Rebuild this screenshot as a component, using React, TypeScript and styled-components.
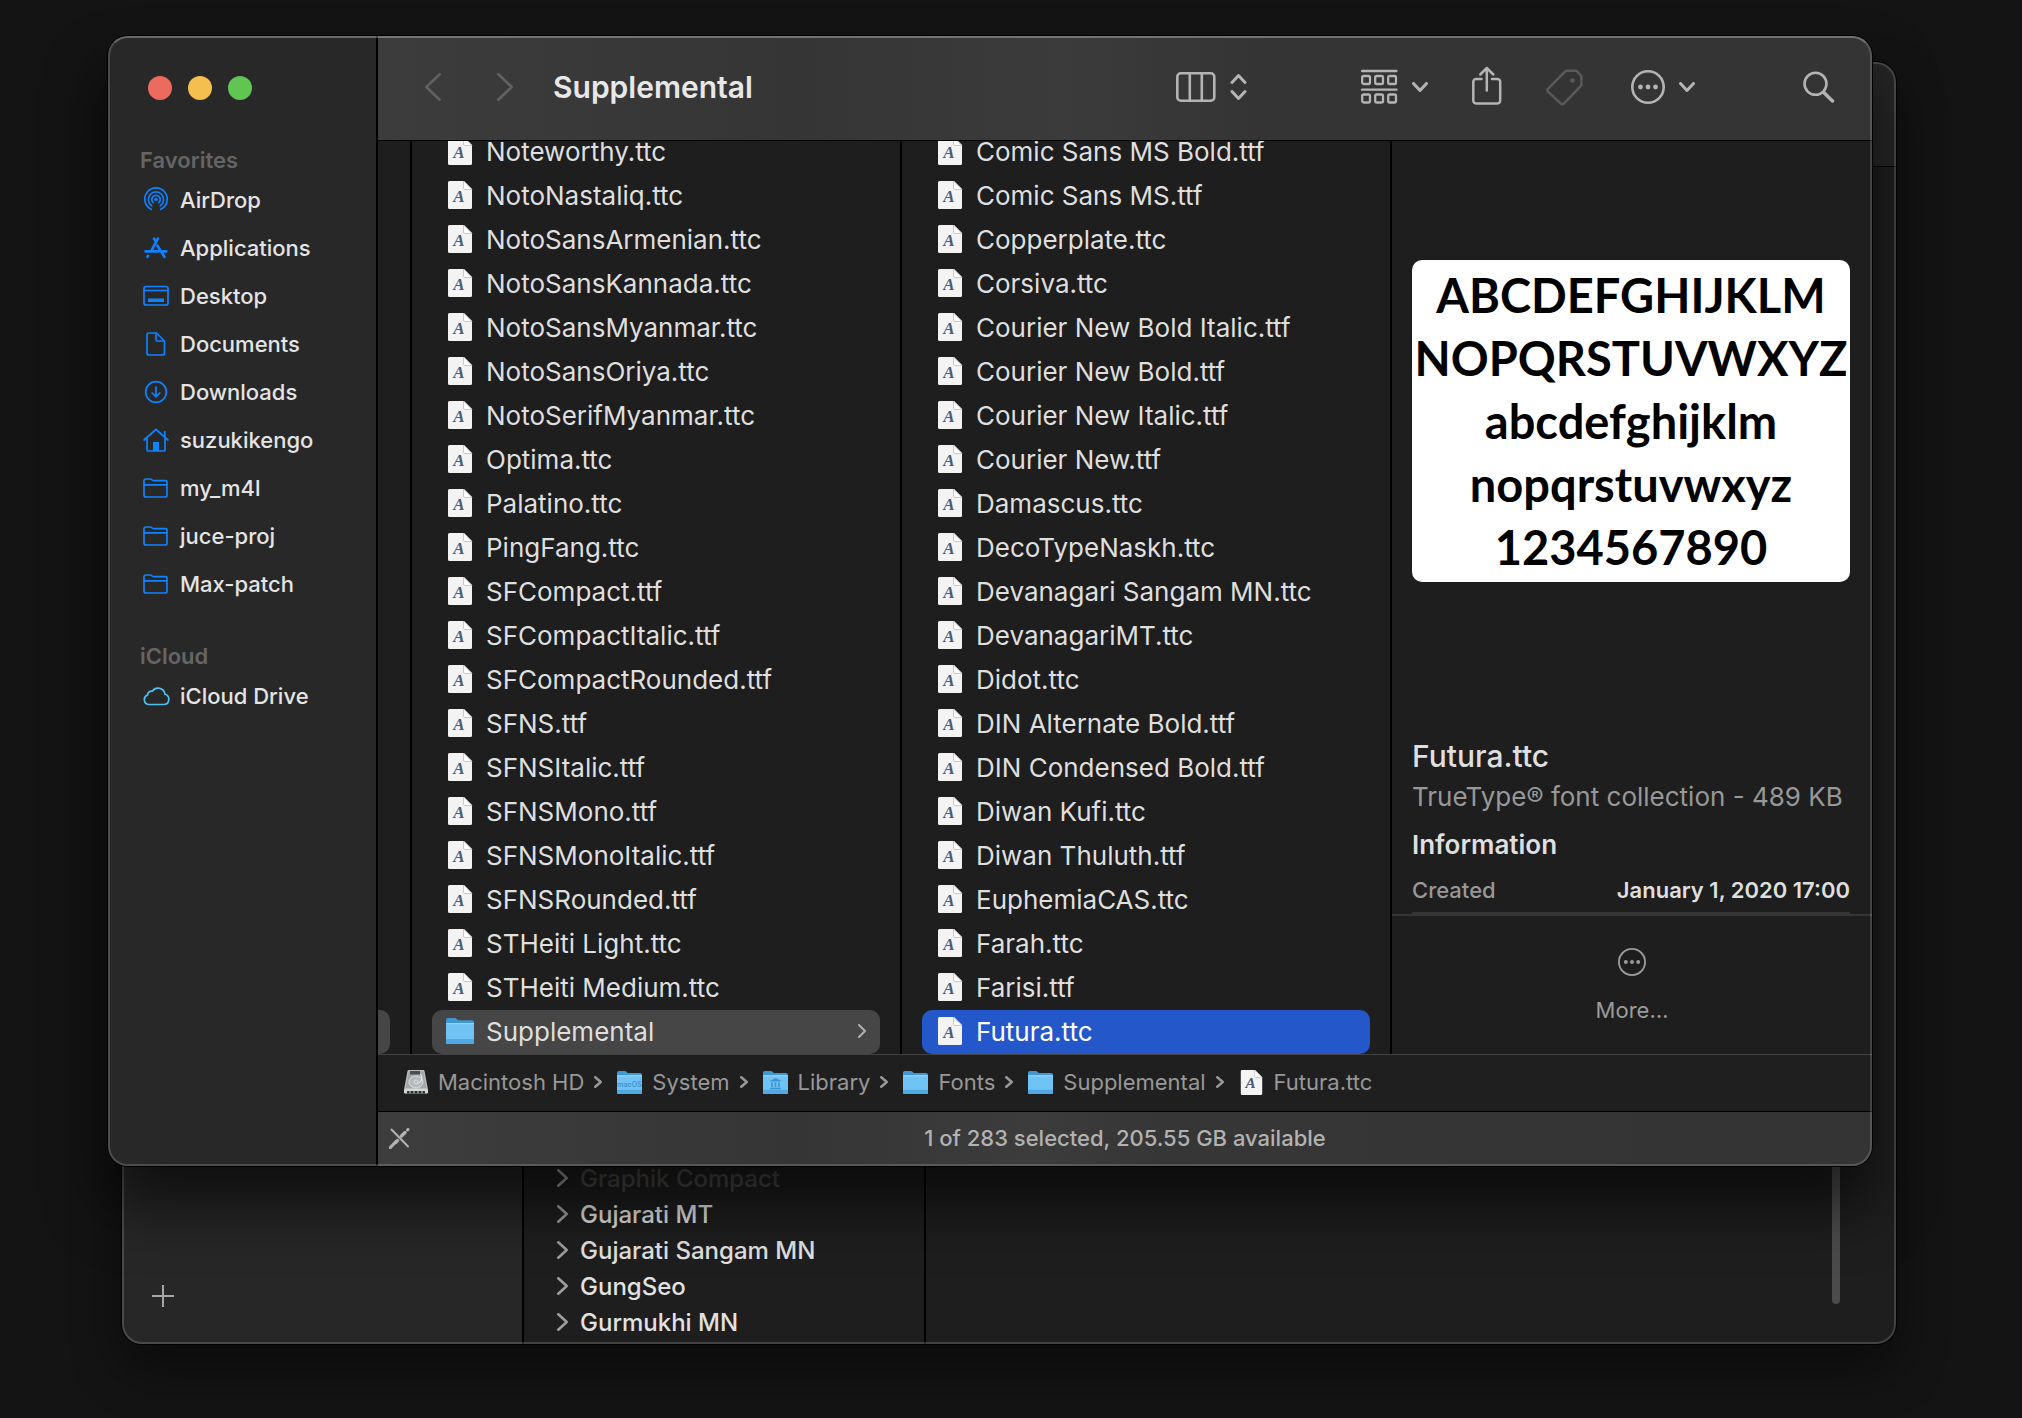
import React from 'react';
import styled, { createGlobalStyle, css } from 'styled-components';

const GlobalStyle = createGlobalStyle`
  *, *::before, *::after { box-sizing: border-box; }
  body { margin: 0; background: #141414; }
  ul { list-style: none; margin: 0; padding: 0; }
  h1, h2, h3, p, dl, dd { margin: 0; }
  button { appearance: none; border: 0; background: none; color: inherit; font: inherit; padding: 0; text-align: left; }
  svg { display: block; flex: none; }
`;

/* ---------- desktop and window frames ---------- */

const Desktop = styled.main`
  position: relative;
  min-height: 100vh;
  overflow: hidden;
  background: #141414;
  color: #dfdfdf;
  font-family: Inter, "Liberation Sans", sans-serif;
  font-size: 22px;
`;

const frame = css`
  position: absolute;
  display: flex;
  border-radius: 20px;
  &::after {
    content: '';
    position: absolute;
    inset: 0;
    border: 2px solid rgba(255, 255, 255, 0.17);
    border-radius: 20px;
    pointer-events: none;
  }
`;

const FinderWindow = styled.section`
  ${frame}
  top: 36px;
  right: 150px;
  bottom: 252px;
  left: 108px;
  background: #1e1e1e;
  box-shadow: 0 0 0 1px #000, 0 40px 60px rgba(0, 0, 0, 0.6);
  &::after { border-top-color: rgba(255, 255, 255, 0.3); }
`;

const FontBookWindow = styled.section`
  ${frame}
  top: 62px;
  right: 126px;
  bottom: 74px;
  left: 122px;
  background: #1e1e1e;
  overflow: hidden;
`;

const FontBookShadow = styled.div`
  position: absolute;
  top: 62px;
  right: 126px;
  bottom: 74px;
  left: 122px;
  border-radius: 20px;
  box-shadow: 0 0 0 1px #000, 0 24px 50px rgba(0, 0, 0, 0.45);
`;

/* ---------- font book window ---------- */

const FontBookSidebar = styled.aside`
  display: flex;
  align-items: flex-end;
  width: 402px;
  padding: 37px 30px;
  background: #272727;
  border-right: 2px solid #000;
`;

const FontBookMain = styled.div`
  flex: 1;
  display: flex;
  flex-direction: column;
`;

const FontBookBar = styled.header`
  height: 105px;
  background: #262626;
  border-bottom: 1px solid #000;
`;

const FontBookBody = styled.div`
  flex: 1;
  display: flex;
`;

const FamilyList = styled.ul`
  display: flex;
  flex-direction: column;
  justify-content: flex-end;
  width: 402px;
  padding: 0 0 4px 33px;
  border-right: 2px solid #000;
`;

const Family = styled.button<{ $dim?: boolean }>`
  display: flex;
  align-items: center;
  gap: 12px;
  height: 36px;
  font-size: 24px;
  font-weight: 500;
  color: ${p => (p.$dim ? '#4a4a4a' : '#e2e2e2')};
`;

const SampleArea = styled.div`
  flex: 1;
  display: flex;
  justify-content: flex-end;
  padding: 40px 56px 40px 0;
`;

const ScrollThumb = styled.div`
  width: 8px;
  border-radius: 4px;
  background: #4b4b4b;
`;

/* ---------- finder sidebar ---------- */

const Sidebar = styled.nav`
  width: 270px;
  padding-top: 40px;
  background: #282828;
  border-right: 2px solid #000;
  border-radius: 20px 0 0 20px;
`;

const Lights = styled.div`
  display: flex;
  gap: 16px;
  padding-left: 40px;
  margin-bottom: 44px;
`;

const Light = styled.button<{ $color: string }>`
  width: 24px;
  height: 24px;
  border-radius: 50%;
  background: ${p => p.$color};
`;

const Group = styled.section`
  margin-bottom: 32px;
`;

const GroupTitle = styled.h2`
  padding-left: 32px;
  font-size: 22px;
  font-weight: 600;
  line-height: 32px;
  color: #656565;
`;

const Place = styled.a<{ $tint?: string }>`
  display: flex;
  align-items: center;
  gap: 10px;
  height: 48px;
  padding-left: 34px;
  font-weight: 500;
  color: #e4e4e4;
  text-decoration: none;
  svg { color: ${p => p.$tint || '#0f82ff'}; }
`;

/* ---------- finder main area ---------- */

const Main = styled.div`
  flex: 1;
  min-width: 0;
  display: flex;
  flex-direction: column;
  border-radius: 0 20px 20px 0;
  overflow: hidden;
`;

const Toolbar = styled.header`
  display: flex;
  align-items: center;
  height: 105px;
  padding: 0 37px 2px 47px;
  background: linear-gradient(90deg, #3c3c3c, #353535 28%, #3b3b3b 46%, #373737 53%, #343434 60%);
  border-bottom: 1px solid #000;
  color: #b4b4b4;
`;

const History = styled.div`
  display: flex;
  gap: 56px;
  margin-right: 40px;
  color: #616161;
`;

const Title = styled.h1`
  flex: 1;
  font-size: 30px;
  font-weight: 600;
  line-height: 36px;
  color: #e8e8e8;
`;

const Tool = styled.button<{ $before?: number; $disabled?: boolean }>`
  display: flex;
  align-items: center;
  gap: 14px;
  margin-left: ${p => p.$before || 0}px;
  color: ${p => (p.$disabled ? '#5a5a5a' : 'inherit')};
`;

const Columns = styled.div`
  flex: 1;
  min-height: 0;
  display: flex;
`;

const ParentColumn = styled.div`
  display: flex;
  flex-direction: column;
  justify-content: flex-end;
  width: 34px;
  border-right: 2px solid #000;
`;

const ParentSelection = styled.div`
  width: 12px;
  height: 44px;
  border-radius: 0 10px 10px 0;
  background: #464646;
`;

const Column = styled.ul`
  display: flex;
  flex-direction: column;
  justify-content: flex-end;
  width: 490px;
  padding: 0 20px;
  overflow: hidden;
  border-right: 2px solid #000;
`;

const FileRow = styled.button<{ $fill?: string }>`
  display: flex;
  align-items: center;
  gap: 12px;
  width: 100%;
  height: 44px;
  padding: 0 14px 2px;
  border-radius: 10px;
  background: ${p => p.$fill || 'transparent'};
  color: ${p => (p.$fill === '#2457c9' ? '#fff' : '#dfdfdf')};
  font-size: 26px;
  white-space: nowrap;
`;

const FileName = styled.span`
  flex: 1;
`;

/* ---------- preview column ---------- */

const Preview = styled.aside`
  flex: 1;
  min-width: 0;
  display: flex;
  flex-direction: column;
`;

const Stage = styled.div`
  flex: 1;
  display: flex;
  align-items: center;
  padding: 0 22px 0 20px;
`;

const Specimen = styled.div`
  flex: 1;
  min-width: 0;
  padding: 4px 0 3px;
  border-radius: 10px;
  background: #fff;
  color: #000;
  font-family: Lato, "Open Sans", sans-serif;
  font-size: 47px;
  font-weight: 700;
  line-height: 63px;
`;

const SpecimenLine = styled.p`
  display: flex;
  justify-content: center;
`;

const Info = styled.div`
  padding: 37px 22px 0 20px;
`;

const InfoName = styled.h2`
  font-size: 30px;
  font-weight: 500;
  line-height: 36px;
`;

const InfoKind = styled.p`
  margin-top: 7px;
  font-size: 26px;
  line-height: 32px;
  color: #989898;
  white-space: nowrap;
`;

const InfoHeading = styled.h3`
  margin-top: 16px;
  font-size: 26px;
  font-weight: 600;
  line-height: 32px;
`;

const InfoRow = styled.dl`
  display: flex;
  justify-content: space-between;
  margin-top: 13px;
  padding-bottom: 6px;
  border-bottom: 2px solid #363636;
  font-weight: 600;
  line-height: 32px;
`;

const InfoLabel = styled.dt`
  font-weight: 500;
  color: #989898;
`;

const MoreArea = styled.div`
  display: flex;
  justify-content: center;
  border-top: 2px solid #363636;
`;

const MoreButton = styled.button`
  display: flex;
  flex-direction: column;
  align-items: center;
  gap: 20px;
  padding: 32px 20px 30px;
  line-height: 28px;
  color: #9b9b9b;
`;

/* ---------- path and status bars ---------- */

const PathBar = styled.nav`
  display: flex;
  align-items: center;
  gap: 10px;
  height: 58px;
  padding: 0 0 2px 26px;
  background: #1f1f1f;
  border-top: 1px solid #424242;
  border-bottom: 1px solid #000;
  color: #989898;
  > svg { margin-right: 5px; }
`;

const Crumb = styled.a`
  display: flex;
  align-items: center;
  gap: 10px;
  color: inherit;
  text-decoration: none;
  white-space: nowrap;
`;

const StatusBar = styled.footer`
  display: grid;
  grid-template-columns: 40px 1fr 40px;
  align-items: center;
  height: 54px;
  padding-bottom: 2px;
  background: linear-gradient(90deg, #3d3d3d, #353535 28%, #3c3c3c 44%, #363636 52%, #343434);
  color: #b2b2b2;
`;

const StatusTool = styled.button`
  padding-left: 11px;
`;

const StatusText = styled.p`
  text-align: center;
  font-weight: 500;
`;

/* ---------- icons ---------- */

type ChevronProps = { w: number; h: number; dir?: 'left' | 'right' | 'down'; stroke?: number; color?: string };

function Chevron({ w, h, dir = 'right', stroke = 3, color = 'currentColor' }: ChevronProps) {
  const m = stroke / 2;
  const points =
    dir === 'right' ? `${m},${m} ${w - m},${h / 2} ${m},${h - m}`
    : dir === 'left' ? `${w - m},${m} ${m},${h / 2} ${w - m},${h - m}`
    : `${m},${m} ${w / 2},${h - m} ${w - m},${m}`;
  return (
    <svg width={w} height={h} fill="none" stroke={color} strokeWidth={stroke} strokeLinecap="round" strokeLinejoin="round">
      <polyline points={points} />
    </svg>
  );
}

function FontFileIcon({ w = 28, h = 28 }: { w?: number; h?: number }) {
  return (
    <svg width={w} height={h} viewBox="0 0 28 28" aria-hidden="true">
      <path d="M3.5 0H18l8 8v18.5a1.5 1.5 0 0 1-1.5 1.5h-21A1.5 1.5 0 0 1 2 26.500V1.500A1.5 1.5 0 0 1 3.500 0z" fill="#f3f3f3" />
      <path d="M17.500 0v7a1.500 1.500 0 0 0 1.500 1.500h7z" fill="#fff" stroke="#bdbdbd" strokeWidth="0.8" />
      <text x="13" y="20.500" textAnchor="middle" fontFamily="Liberation Serif, serif" fontStyle="italic" fontWeight="700" fontSize="17" fill="#4b5a78">A</text>
    </svg>
  );
}

function FolderIcon({ w = 28, mark }: { w?: number; mark?: 'macos' | 'library' }) {
  return (
    <svg width={w} height={w} viewBox="0 0 28 28" aria-hidden="true">
      <path d="M0 3a2 2 0 0 1 2-2h6.500c1 0 1.500.3 2.200 1l1.300 1.300H26a2 2 0 0 1 2 2V12H0z" fill="#3f97d3" />
      <rect y="6" width="28" height="21" rx="1.5" fill="#6fc3f5" />
      <rect y="6" width="28" height="1.2" rx="0.6" fill="#92d6fb" />
      <path d="M0 22h28v3.500a1.500 1.500 0 0 1-1.500 1.500h-25A1.500 1.500 0 0 1 0 25.500z" fill="#4fa9e2" />
      {mark === 'macos' && <text x="14" y="18.500" textAnchor="middle" fontSize="8" fontWeight="600" fill="#3f93cf">macOS</text>}
      {mark === 'library' && (
        <path d="M8 12l6-3 6 3v1H8zM9.200 14h1.800v5H9.200zM13.100 14h1.800v5h-1.800zM17 14h1.800v5H17zM8 20h12v1.500H8z" fill="#3f93cf" />
      )}
    </svg>
  );
}

function DiskIcon() {
  return (
    <svg width="24" height="24" viewBox="0 0 24 24" aria-hidden="true">
      <path d="M3.500 1Q3.700 0 4.800 0h14.400q1.100 0 1.300 1L24 19.500H0z" fill="#b9bdc0" />
      <path d="M4.500 1.500h15L22.300 18H1.700z" fill="#a3a8ab" />
      <rect x="6" y="1" width="10" height="3.500" fill="#4c4f51" />
      <ellipse cx="12" cy="12" rx="7" ry="6" fill="#b4b9bc" stroke="#dde0e2" strokeWidth="1" />
      <circle cx="12" cy="12" r="2" fill="none" stroke="#dde0e2" strokeWidth="1" />
      <path d="M13.500 13.500C18 12 19 8 16.500 4" fill="none" stroke="#e8eaeb" strokeWidth="1.2" />
      <rect y="19" width="24" height="4.500" rx="1" fill="#d5d8d9" />
      <path d="M3 21h18v2.500H3z" fill="#333" />
      <path d="M6 21v2.500M10 21v2.500M14 21v2.500M18 21v2.500" stroke="#c9cccd" strokeWidth="1" />
    </svg>
  );
}

function EllipsisCircle({ size, stroke }: { size: number; stroke: number }) {
  return (
    <svg width={size} height={size} viewBox="0 0 34 34" fill="currentColor">
      <circle cx="17" cy="17" r={17 - stroke / 2} fill="none" stroke="currentColor" strokeWidth={stroke} />
      <circle cx="9.500" cy="17" r="2.400" />
      <circle cx="17" cy="17" r="2.400" />
      <circle cx="24.500" cy="17" r="2.400" />
    </svg>
  );
}

const placeArt: Record<string, React.ReactNode> = {
  airdrop: (
    <>
      <path d="M9.300 23.300a11.200 11.200 0 1 1 9.400 0M9.800 19.900a7.600 7.600 0 1 1 8.400 0M11.300 16.700a4.200 4.200 0 1 1 5.400 0" />
      <circle cx="14" cy="13.500" r="1.800" fill="currentColor" stroke="none" />
    </>
  ),
  apps: (
    <g strokeWidth="2.600">
      <path d="M16 4.500L9.300 16.800M12 4.500l2.200 3.700M15.300 11.500L22.600 23M3.500 17.400h13M21 17.400h3.300M6 21.800l-.6 1" />
    </g>
  ),
  desktop: (
    <>
      <rect x="2" y="4.500" width="24" height="18.500" rx="2" />
      <path d="M2 8.500h24" />
      <path d="M6 16.500h16v3.500H6z" fill="currentColor" stroke="none" />
    </>
  ),
  doc: (
    <>
      <path d="M14.500 3H7a2 2 0 0 0-2 2v18a2 2 0 0 0 2 2h13.500a2 2 0 0 0 2-2V11z" />
      <path d="M14 3v6.500a1.500 1.500 0 0 0 1.500 1.500h7" />
    </>
  ),
  down: (
    <>
      <circle cx="14" cy="14" r="10.300" />
      <path d="M14 9v9.500M10.200 15l3.800 3.800 3.800-3.800" />
    </>
  ),
  home: (
    <>
      <path d="M2 14L14 3.500 26 14M5 12v11.500a1.500 1.500 0 0 0 1.500 1.500h15a1.500 1.500 0 0 0 1.500-1.500V12M22.800 10.500V5.500" />
      <path d="M11 16h6v9h-6z" fill="currentColor" stroke="none" />
    </>
  ),
  folder: (
    <>
      <path d="M2 7a2 2 0 0 1 2-2h4.500c1.200 0 1.600 1.600 3 1.600H23a2 2 0 0 1 2 2V21a2 2 0 0 1-2 2H4a2 2 0 0 1-2-2z" />
      <path d="M2 10.800h23" />
    </>
  ),
  cloud: (
    <path d="M7 22.500h14.500a5.200 5.200 0 0 0 1.500-10.200A7 7 0 0 0 10.300 9.200 4 4 0 0 0 5.600 13 4.900 4.900 0 0 0 7 22.500z" />
  ),
};

function PlaceIcon({ name }: { name: string }) {
  return (
    <svg width="28" height="28" viewBox="0 0 28 28" fill="none" stroke="currentColor" strokeWidth="1.700" strokeLinecap="round" strokeLinejoin="round" aria-hidden="true">
      {placeArt[name]}
    </svg>
  );
}

function ColumnsIcon() {
  return (
    <svg width="40" height="30" fill="none" stroke="currentColor" strokeWidth="2.600">
      <rect x="1.300" y="1.300" width="37" height="27.400" rx="3.500" />
      <path d="M13.800 1.300v27.400M25.800 1.300v27.400" />
    </svg>
  );
}

function UpDownIcon() {
  return (
    <svg width="17" height="28" fill="none" stroke="currentColor" strokeWidth="3" strokeLinecap="round" strokeLinejoin="round">
      <path d="M2 9.500l6.500-7 6.500 7M2 18.500l6.500 7 6.500-7" />
    </svg>
  );
}

function GroupIcon() {
  const cells = [0, 13, 26].flatMap(x => [7, 25.5].map(y => ({ x, y })));
  return (
    <svg width="37" height="36" fill="none" stroke="currentColor" strokeWidth="2.300">
      <path d="M1 2h34.500M1 20.700h34.500" strokeLinecap="round" />
      {cells.map(c => <rect key={`${c.x}-${c.y}`} x={c.x + 1.200} y={c.y} width="7.800" height="8" rx="1.500" />)}
    </svg>
  );
}

function ShareIcon() {
  return (
    <svg width="30" height="42" fill="none" stroke="currentColor" strokeWidth="2.500" strokeLinecap="round" strokeLinejoin="round">
      <path d="M9.500 13H4a2.700 2.700 0 0 0-2.700 2.700v19A2.700 2.700 0 0 0 4 37.400h21.500a2.700 2.700 0 0 0 2.700-2.700v-19a2.700 2.700 0 0 0-2.700-2.700H20" />
      <path d="M14.800 24.500V2.500M8.300 8.500l6.500-6.500 6.500 6.500" />
    </svg>
  );
}

function TagIcon() {
  return (
    <svg width="37" height="38" fill="none" stroke="currentColor" strokeWidth="2.500" strokeLinejoin="round">
      <path d="M2 20.800L19.300 3.400a2.500 2.500 0 0 1 1.800-.7h8.200a2.500 2.500 0 0 1 1.800.8l3.600 3.900a2.500 2.500 0 0 1 .7 1.700v7.200a2.500 2.500 0 0 1-.7 1.800L17.800 35.700a2 2 0 0 1-2.900 0L2 23.600a2 2 0 0 1 0-2.800z" />
      <circle cx="26.500" cy="12.500" r="2.300" fill="currentColor" stroke="none" />
    </svg>
  );
}

function SearchIcon() {
  return (
    <svg width="32" height="32" fill="none" stroke="currentColor" strokeWidth="2.600" strokeLinecap="round">
      <circle cx="12.500" cy="12.800" r="11" />
      <path d="M20.800 21.500l8.700 8.500" strokeWidth="3.400" />
    </svg>
  );
}

function ToolsOffIcon() {
  return (
    <svg width="21" height="21" fill="none" stroke="currentColor" strokeWidth="2" strokeLinecap="round">
      <path d="M2.500 1.500L19 18.500" />
      <path d="M1 20l6-6.500" strokeWidth="3" />
      <path d="M6.500 14.500l2-2M12.500 8l3.500-3.500" strokeWidth="3.400" />
      <path d="M18.500 2l.5-.5" strokeWidth="3" />
    </svg>
  );
}

function PlusIcon() {
  return (
    <svg width="22" height="22" fill="none" stroke="#a6a6a6" strokeWidth="2">
      <path d="M11 0v22M0 11h22" />
    </svg>
  );
}

/* ---------- data ---------- */

const favorites = [
  ['airdrop', 'AirDrop'], ['apps', 'Applications'], ['desktop', 'Desktop'],
  ['doc', 'Documents'], ['down', 'Downloads'], ['home', 'suzukikengo'],
  ['folder', 'my_m4l'], ['folder', 'juce-proj'], ['folder', 'Max-patch'],
];

const fontsFolder = [
  'Noteworthy.ttc', 'NotoNastaliq.ttc', 'NotoSansArmenian.ttc', 'NotoSansKannada.ttc',
  'NotoSansMyanmar.ttc', 'NotoSansOriya.ttc', 'NotoSerifMyanmar.ttc', 'Optima.ttc',
  'Palatino.ttc', 'PingFang.ttc', 'SFCompact.ttf', 'SFCompactItalic.ttf',
  'SFCompactRounded.ttf', 'SFNS.ttf', 'SFNSItalic.ttf', 'SFNSMono.ttf',
  'SFNSMonoItalic.ttf', 'SFNSRounded.ttf', 'STHeiti Light.ttc', 'STHeiti Medium.ttc',
];

const supplementalFolder = [
  'Comic Sans MS Bold.ttf', 'Comic Sans MS.ttf', 'Copperplate.ttc', 'Corsiva.ttc',
  'Courier New Bold Italic.ttf', 'Courier New Bold.ttf', 'Courier New Italic.ttf',
  'Courier New.ttf', 'Damascus.ttc', 'DecoTypeNaskh.ttc', 'Devanagari Sangam MN.ttc',
  'DevanagariMT.ttc', 'Didot.ttc', 'DIN Alternate Bold.ttf', 'DIN Condensed Bold.ttf',
  'Diwan Kufi.ttc', 'Diwan Thuluth.ttf', 'EuphemiaCAS.ttc', 'Farah.ttc', 'Farisi.ttf',
];

const specimen = ['ABCDEFGHIJKLM', 'NOPQRSTUVWXYZ', 'abcdefghijklm', 'nopqrstuvwxyz', '1234567890'];

const families = ['Graphik Compact', 'Gujarati MT', 'Gujarati Sangam MN', 'GungSeo', 'Gurmukhi MN'];

const crumbs: [string, React.ReactNode][] = [
  ['Macintosh HD', <DiskIcon />],
  ['System', <FolderIcon w={25} mark="macos" />],
  ['Library', <FolderIcon w={25} mark="library" />],
  ['Fonts', <FolderIcon w={25} />],
  ['Supplemental', <FolderIcon w={25} />],
  ['Futura.ttc', <FontFileIcon w={25} h={25} />],
];

function File({ name, fill }: { name: string; fill?: string }) {
  return (
    <li>
      <FileRow $fill={fill}>
        <FontFileIcon />
        <FileName>{name}</FileName>
      </FileRow>
    </li>
  );
}

function FontBook() {
  return (
    <>
      <FontBookShadow />
      <FontBookWindow aria-label="Font Book">
        <FontBookSidebar>
          <button aria-label="Add collection"><PlusIcon /></button>
        </FontBookSidebar>
        <FontBookMain>
          <FontBookBar />
          <FontBookBody>
            <FamilyList>
              {families.map((name, i) => (
                <li key={name}>
                  <Family $dim={i === 0}>
                    <Chevron w={11} h={18} stroke={2.5} color="#a0a0a0" />
                    {name}
                  </Family>
                </li>
              ))}
            </FamilyList>
            <SampleArea><ScrollThumb /></SampleArea>
          </FontBookBody>
        </FontBookMain>
      </FontBookWindow>
    </>
  );
}

export default function App() {
  return (
    <>
      <GlobalStyle />
      <Desktop>
        <FontBook />
        <FinderWindow aria-label="Finder">
          <Sidebar>
            <Lights>
              <Light $color="#ec6a5e" aria-label="Close" />
              <Light $color="#f4bf4f" aria-label="Minimize" />
              <Light $color="#61c554" aria-label="Zoom" />
            </Lights>
            <Group>
              <GroupTitle>Favorites</GroupTitle>
              {favorites.map(([icon, label]) => (
                <Place href="#" key={label}>
                  <PlaceIcon name={icon} />
                  {label}
                </Place>
              ))}
            </Group>
            <Group>
              <GroupTitle>iCloud</GroupTitle>
              <Place href="#" $tint="#4fc0f0">
                <PlaceIcon name="cloud" />
                iCloud Drive
              </Place>
            </Group>
          </Sidebar>
          <Main>
            <Toolbar>
              <History>
                <button aria-label="Back"><Chevron w={16} h={28} dir="left" stroke={2.6} /></button>
                <button aria-label="Forward"><Chevron w={16} h={28} stroke={2.6} /></button>
              </History>
              <Title>Supplemental</Title>
              <Tool aria-label="View as columns"><ColumnsIcon /><UpDownIcon /></Tool>
              <Tool aria-label="Group" $before={114}><GroupIcon /><Chevron w={16} h={10} dir="down" /></Tool>
              <Tool aria-label="Share" $before={44}><ShareIcon /></Tool>
              <Tool aria-label="Edit tags" $before={44} $disabled><TagIcon /></Tool>
              <Tool aria-label="Actions" $before={48}><EllipsisCircle size={34} stroke={2.6} /><Chevron w={16} h={10} dir="down" /></Tool>
              <Tool aria-label="Search" $before={108}><SearchIcon /></Tool>
            </Toolbar>
            <Columns>
              <ParentColumn><ParentSelection /></ParentColumn>
              <Column>
                {fontsFolder.map(name => <File key={name} name={name} />)}
                <li>
                  <FileRow $fill="#464646">
                    <FolderIcon />
                    <FileName>Supplemental</FileName>
                    <Chevron w={8} h={14} stroke={2} color="#b0b0b0" />
                  </FileRow>
                </li>
              </Column>
              <Column>
                {supplementalFolder.map(name => <File key={name} name={name} />)}
                <File name="Futura.ttc" fill="#2457c9" />
              </Column>
              <Preview>
                <Stage>
                  <Specimen>
                    {specimen.map(line => <SpecimenLine key={line}>{line}</SpecimenLine>)}
                  </Specimen>
                </Stage>
                <Info>
                  <InfoName>Futura.ttc</InfoName>
                  <InfoKind>TrueType® font collection - 489 KB</InfoKind>
                  <InfoHeading>Information</InfoHeading>
                  <InfoRow>
                    <InfoLabel>Created</InfoLabel>
                    <dd>January 1, 2020 17:00</dd>
                  </InfoRow>
                </Info>
                <MoreArea>
                  <MoreButton>
                    <EllipsisCircle size={28} stroke={2.2} />
                    More…
                  </MoreButton>
                </MoreArea>
              </Preview>
            </Columns>
            <PathBar aria-label="Path">
              {crumbs.map(([label, icon], i) => (
                <React.Fragment key={label}>
                  <Crumb href="#">{icon}{label}</Crumb>
                  {i < crumbs.length - 1 && <Chevron w={8} h={12} stroke={2.5} />}
                </React.Fragment>
              ))}
            </PathBar>
            <StatusBar>
              <StatusTool aria-label="Editing off"><ToolsOffIcon /></StatusTool>
              <StatusText>1 of 283 selected, 205.55 GB available</StatusText>
            </StatusBar>
          </Main>
        </FinderWindow>
      </Desktop>
    </>
  );
}
